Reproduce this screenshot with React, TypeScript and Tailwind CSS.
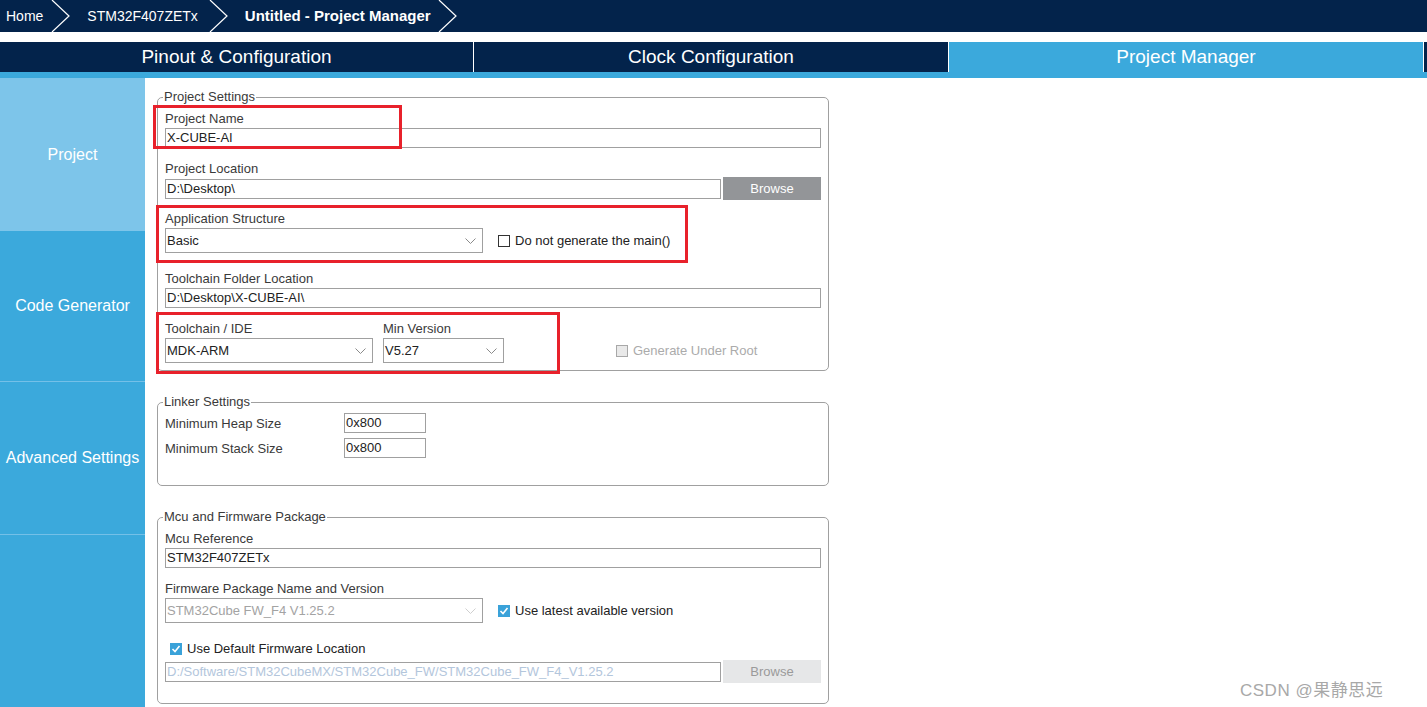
import React from 'react';

const NAVY = 'bg-[#03234b]';

function Crumb() {
  return (
    <svg width="20" height="32" viewBox="0 0 20 32" className="shrink-0">
      <polyline points="1,0 18,16 1,32" fill="none" stroke="#ffffff" strokeWidth="1.2" />
    </svg>
  );
}

function Chevron({ light }: { light?: boolean }) {
  return (
    <svg width="11" height="6" viewBox="0 0 11 6" className="shrink-0">
      <polyline points="0.5,0.5 5.5,5.5 10.5,0.5" fill="none" stroke={light ? '#cfcfcf' : '#8a8a8a'} strokeWidth="1" />
    </svg>
  );
}

function Label({ children, className = '' }: { children: React.ReactNode; className?: string }) {
  return <div className={`h-[15px] leading-[15px] text-[13px] text-[#3a3a3a] ${className}`}>{children}</div>;
}

function TextBox({ value, className = '', disabled }: { value: string; className?: string; disabled?: boolean }) {
  return (
    <div
      className={`h-[20px] border border-[#a0a0a0] bg-white px-[1px] leading-[18px] text-[13px] whitespace-nowrap overflow-hidden ${
        disabled ? 'text-[#b3c6dc]' : 'text-[#222]'
      } ${className}`}
    >
      {value}
    </div>
  );
}

function Select({ value, width, disabled }: { value: string; width: string; disabled?: boolean }) {
  return (
    <div
      className={`h-[25px] ${width} border border-[#a0a0a0] bg-white pl-[1px] pr-[6px] flex items-center justify-between text-[13px] ${
        disabled ? 'text-[#a3a3a3]' : 'text-[#222]'
      }`}
    >
      <span>{value}</span>
      <Chevron light={disabled} />
    </div>
  );
}

function Check({ checked, disabled, label }: { checked?: boolean; disabled?: boolean; label: string }) {
  return (
    <div className="flex items-center gap-[5px] h-[15px] leading-[15px] text-[13px]">
      {checked ? (
        <span className="w-[12px] h-[12px] bg-[#3aa2d9] flex items-center justify-center">
          <svg width="10" height="10" viewBox="0 0 10 10">
            <polyline points="1.5,5 4,7.5 8.5,2" fill="none" stroke="#fff" strokeWidth="1.6" />
          </svg>
        </span>
      ) : (
        <span
          className={`w-[12px] h-[12px] border ${disabled ? 'border-[#a8a8a8] bg-[#e9e9e9]' : 'border-[#333] bg-white'}`}
        />
      )}
      <span className={disabled ? 'text-[#ababab]' : 'text-[#222]'}>{label}</span>
    </div>
  );
}

function Browse({ disabled }: { disabled?: boolean }) {
  return (
    <div
      className={`w-[98px] h-[23px] ml-[2px] flex items-center justify-center text-[13px] ${
        disabled ? 'bg-[#e6e7e8] text-[#9a9a9a]' : 'bg-[#939598] text-white'
      }`}
    >
      Browse
    </div>
  );
}

function Group({ title, className, children }: { title: string; className: string; children: React.ReactNode }) {
  return (
    <fieldset className={`w-[672px] border border-[#a0a0a0] rounded-[5px] px-[7px] ${className}`}>
      <legend className="ml-[-2px] px-[1px] h-[16px] leading-[16px] text-[13px] text-[#3a3a3a]">{title}</legend>
      {children}
    </fieldset>
  );
}

export default function App() {
  return (
    <div className="relative w-[1427px] h-[707px] overflow-hidden bg-white font-['Liberation_Sans',Arial,sans-serif]">
      {/* breadcrumb bar */}
      <div className={`h-[32px] ${NAVY} flex items-center text-white text-[14px]`}>
        <span className="ml-[6px]">Home</span>
        <span className="ml-[8px]"><Crumb /></span>
        <span className="ml-[16px]">STM32F407ZETx</span>
        <span className="ml-[11px]"><Crumb /></span>
        <span className="ml-[16px] font-bold text-[15px]">Untitled - Project Manager</span>
        <span className="ml-[7px]"><Crumb /></span>
      </div>
      <div className="h-[10px]" />

      {/* main tabs */}
      <div className={`h-[30px] flex ${NAVY} text-white text-[19px]`}>
        <div className="w-[474px] flex items-center justify-center border-r border-white">Pinout &amp; Configuration</div>
        <div className="w-[475px] flex items-center justify-center border-r border-white">Clock Configuration</div>
        <div className="w-[475px] flex items-center justify-center bg-[#3ba9dc] border-r border-white">Project Manager</div>
      </div>
      <div className="h-[6px] bg-[#3ba9dc]" />

      <div className="flex h-[629px]">
        {/* side menu */}
        <div className="w-[145px] bg-[#3ba9dc] text-white text-[16px] flex flex-col">
          <div className="h-[153px] bg-[#7dc5ea] flex items-center justify-center">Project</div>
          <div className="h-[151px] border-b border-[#74c0e8] flex items-center justify-center">Code Generator</div>
          <div className="h-[153px] border-b border-[#74c0e8] flex items-center justify-center">Advanced Settings</div>
        </div>

        {/* content */}
        <div className="pl-[12px]">
          <Group title="Project Settings" className="mt-[11px] h-[282px]">
            <Label className="mt-[6px]">Project Name</Label>
            <TextBox value="X-CUBE-AI" className="mt-[2px] w-[656px]" />

            <Label className="mt-[13px]">Project Location</Label>
            <div className="mt-[1px] h-[23px] flex items-center">
              <TextBox value="D:\Desktop\" className="w-[556px]" />
              <Browse />
            </div>

            <Label className="mt-[11px]">Application Structure</Label>
            <div className="mt-[2px] flex items-center">
              <Select value="Basic" width="w-[318px]" />
              <div className="ml-[15px]">
                <Check label="Do not generate the main()" />
              </div>
            </div>

            <Label className="mt-[18px]">Toolchain Folder Location</Label>
            <TextBox value="D:\Desktop\X-CUBE-AI\" className="mt-[2px] w-[656px]" />

            <div className="mt-[13px] flex items-end">
              <div className="flex flex-col gap-[2px]">
                <Label>Toolchain / IDE</Label>
                <Select value="MDK-ARM" width="w-[208px]" />
              </div>
              <div className="ml-[10px] flex flex-col gap-[2px]">
                <Label>Min Version</Label>
                <Select value="V5.27" width="w-[121px]" />
              </div>
              <div className="ml-[112px] h-[25px] flex items-center">
                <Check disabled label="Generate Under Root" />
              </div>
            </div>
          </Group>

          <Group title="Linker Settings" className="mt-[23px] h-[92px]">
            <div className="mt-[3px] h-[20px] flex items-center">
              <Label className="w-[179px]">Minimum Heap Size</Label>
              <TextBox value="0x800" className="w-[82px]" />
            </div>
            <div className="mt-[5px] h-[20px] flex items-center">
              <Label className="w-[179px]">Minimum Stack Size</Label>
              <TextBox value="0x800" className="w-[82px]" />
            </div>
          </Group>

          <Group title="Mcu and Firmware Package" className="mt-[23px] h-[195px]">
            <Label className="mt-[6px]">Mcu Reference</Label>
            <TextBox value="STM32F407ZETx" className="mt-[2px] w-[656px]" />

            <Label className="mt-[13px]">Firmware Package Name and Version</Label>
            <div className="mt-[2px] flex items-center">
              <Select value="STM32Cube FW_F4 V1.25.2" width="w-[318px]" disabled />
              <div className="ml-[15px]">
                <Check checked label="Use latest available version" />
              </div>
            </div>

            <div className="mt-[18px] ml-[5px]">
              <Check checked label="Use Default Firmware Location" />
            </div>
            <div className="mt-[4px] h-[23px] flex items-center">
              <TextBox value="D:/Software/STM32CubeMX/STM32Cube_FW/STM32Cube_FW_F4_V1.25.2" className="w-[556px]" disabled />
              <Browse disabled />
            </div>
          </Group>
        </div>
      </div>

      {/* red annotation frames */}
      <div className="absolute left-[153px] top-[105px] w-[249px] h-[44px] border-[3px] border-[#e8212b]" />
      <div className="absolute left-[156px] top-[205px] w-[532px] h-[58px] border-[3px] border-[#e8212b]" />
      <div className="absolute left-[156px] top-[312px] w-[404px] h-[62px] border-[3px] border-[#e8212b]" />

      {/* watermark */}
      <div className="absolute left-[1240px] top-[678px] text-[17px] tracking-[0.5px] text-[#a8a8a8] font-['Liberation_Sans','Noto_Sans_CJK_SC',sans-serif] whitespace-nowrap">
        CSDN @果静思远
      </div>
    </div>
  );
}
